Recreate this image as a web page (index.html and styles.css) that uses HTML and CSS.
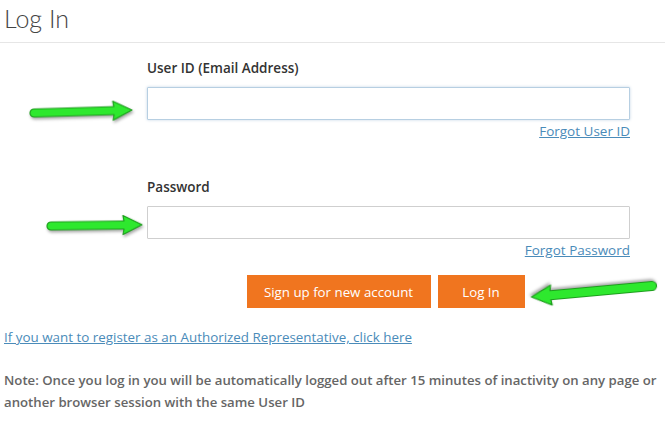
FILE: index.html
```html
<!DOCTYPE html>
<html>
<head>
  <meta charset="UTF-8">
  <title>Log In</title>
  <link rel="stylesheet" href="styles.css">
</head>
<body>
  <div class="page">
    <div class="page-title">
      <h1>Log In</h1>
    </div>

    <form class="login-form" onsubmit="return false">
      <div class="field">
        <label for="userid">User ID (Email Address)</label>
        <input type="text" id="userid" class="focused">
        <div class="forgot"><a href="#">Forgot User ID</a></div>
      </div>

      <div class="field">
        <label for="password">Password</label>
        <input type="password" id="password">
        <div class="forgot"><a href="#">Forgot Password</a></div>
      </div>

      <div class="actions">
        <button type="button" class="btn btn-signup">Sign up for new account</button>
        <button type="submit" class="btn btn-login">Log In</button>
      </div>
    </form>

    <p class="register"><a href="#">If you want to register as an Authorized Representative, click here</a></p>

    <p class="note">Note: Once you log in you will be automatically logged out after 15 minutes of inactivity on any page or another browser session with the same User ID</p>

    <!-- green arrows drawn over the page -->
    <svg class="arrows" width="665" height="448" viewBox="0 0 665 448">
      <path transform="translate(34,113) rotate(-1.7)" d="M0,-4 L80,-4 L79,-9.5 L98,0 L79,9.5 L80,4 L0,4 A4,4 0 0 1 0,-4 Z"/>
      <path transform="translate(51,226) rotate(-0.8)" d="M0,-4 L73,-4 L72,-9.5 L91,0 L72,9.5 L73,4 L0,4 A4,4 0 0 1 0,-4 Z"/>
      <path transform="translate(652,286) rotate(174.8)" d="M0,-4.5 L102,-4.5 L101,-10 L121,0 L101,10 L102,4.5 L0,4.5 A4.5,4.5 0 0 1 0,-4.5 Z"/>
    </svg>
  </div>
</body>
</html>
```

FILE: styles.css
```css
body {
  margin: 0;
  font-family: "Open Sans", Lato, sans-serif;
  color: #333;
  background-color: white;
  overflow: hidden;
}
.page {
  position: relative;
  width: 665px;
  height: 448px;
  overflow: hidden;
}
.page-title {
  height: 42px;
  border-bottom: 1px solid #e6e6e6;
}
.page-title h1 {
  margin: 0;
  padding: 3px 0 0 4px;
  font-family: Lato, sans-serif;
  font-size: 25px;
  font-weight: 300;
  line-height: 30px;
  color: #444;
}
.login-form {
  margin: 16px 0 0 147px;
  width: 483px;
}
.field {
  margin-bottom: 38px;
}
.field:nth-child(2) {
  margin-bottom: 16px;
}
.field label {
  display: block;
  font-size: 13.5px;
  font-weight: 600;
  line-height: 18px;
  margin-bottom: 10px;
  color: #333;
}
.field input {
  display: block;
  box-sizing: border-box;
  width: 483px;
  height: 33px;
  border: 1px solid #cfcfcf;
  border-radius: 1px;
  background: white;
  outline: none;
}
.field input.focused {
  border-color: #b7cfe2;
  box-shadow: 0 0 3px rgba(120,160,200,0.45);
}
.forgot {
  text-align: right;
  font-size: 13.5px;
  line-height: 18px;
  margin-top: 2px;
}
a {
  color: #4a8bb9;
  text-decoration: underline;
}
.actions {
  display: flex;
  justify-content: center;
  gap: 7px;
  padding-right: 6px;
}
.btn {
  height: 33px;
  padding: 0;
  border: none;
  border-radius: 0;
  background-color: #f0751f;
  color: white;
  font-family: "Open Sans", Lato, sans-serif;
  font-size: 13.3px;
}
.btn-signup {
  width: 184px;
}
.btn-login {
  width: 87px;
}
.register {
  margin: 20px 0 0 4px;
  font-size: 13.4px;
  line-height: 18px;
}
.note {
  margin: 23px 0 0 4px;
  width: 660px;
  font-size: 13.2px;
  font-weight: 600;
  line-height: 22px;
  color: #666;
}
.arrows {
  position: absolute;
  left: 0;
  top: 0;
  pointer-events: none;
}
.arrows path {
  fill: #2ee82e;
  stroke: #1c9e1c;
  stroke-width: 1.2;
  stroke-linejoin: round;
  filter: drop-shadow(1px 2px 1.5px rgba(0,0,0,0.35));
}
```
